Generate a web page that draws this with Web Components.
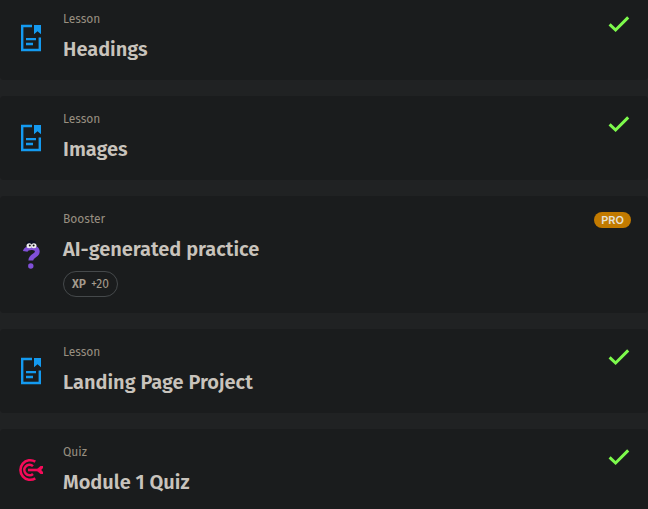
<!DOCTYPE html>
<html lang="en">
<head>
<meta charset="utf-8">
<title>Module lessons</title>
<style>
html{background:#202223}
body{margin:0;overflow:hidden;font-family:"Fira Sans","Noto Sans",sans-serif;color:#c8c3bc}
</style>
</head>
<body>
<lesson-list>
  <lesson-card kind="lesson" label="Lesson" status="done">Headings</lesson-card>
  <lesson-card kind="lesson" label="Lesson" status="done">Images</lesson-card>
  <lesson-card kind="booster" label="Booster" status="pro">AI-generated practice<xp-chip slot="extra">+20</xp-chip></lesson-card>
  <lesson-card kind="lesson" label="Lesson" status="done">Landing Page Project</lesson-card>
  <lesson-card kind="quiz" label="Quiz" status="done">Module 1 Quiz</lesson-card>
</lesson-list>
<script>
const icons = {
  lesson: `<svg width="32" height="32" viewBox="0 0 32 32" aria-hidden="true"><path d="M17 4H7.2V28H24.8V15.5" fill="none" stroke="#149af0" stroke-width="2.4"/><path d="M19 3H26V12.2L22.5 9.2L19 12.2Z" fill="#149af0"/><path d="M11 17.2H21M11 22H18" stroke="#149af0" stroke-width="2.3"/></svg>`,
  booster: `<svg width="32" height="32" viewBox="0 0 32 32" aria-hidden="true"><path d="M10.2 12.4C11 8 22.3 6.5 22.3 12.8C22.3 17 16 16 15.8 21.5" fill="none" stroke="#8150d8" stroke-width="4.8"/><circle cx="15.8" cy="27" r="2.7" fill="#8150d8"/><path d="M11.5 6Q10 2 14 2.5Q16 0 18 2Q21 1 21 5V8H12Z" fill="#0b1022"/><ellipse cx="14.2" cy="6.8" rx="2.7" ry="2.5" fill="#eee"/><ellipse cx="18.9" cy="6.8" rx="2.6" ry="2.5" fill="#eee"/><circle cx="14.8" cy="6.5" r="1" fill="#111"/><circle cx="18.6" cy="6.5" r="1" fill="#111"/></svg>`,
  quiz: `<svg width="32" height="32" viewBox="0 0 32 32" aria-hidden="true"><g fill="none" stroke="#f50b59" stroke-width="2.6"><path d="M20.3 6.6A9.8 9.8 0 1 0 20.3 23.4"/><path d="M18 11.1A5.2 5.2 0 1 0 18 18.9"/><path d="M13 15H24"/></g><path d="M21 15L25.5 11H28V13L26.2 15L28 17V19H25.5Z" fill="#f50b59"/></svg>`,
  done: `<svg width="24" height="24" viewBox="0 0 24 24" role="img" aria-label="Completed"><path d="M2.6 12.3L8.6 18L21.2 5.4" fill="none" stroke="#7dfa4c" stroke-width="3"/></svg>`
};
customElements.define('lesson-list', class extends HTMLElement {
  constructor() {
    super();
    this.attachShadow({mode:'open'}).innerHTML = `<style>
      :host{display:flex;flex-direction:column;gap:16px;margin-top:-4px}
    </style><slot></slot>`;
  }
});
customElements.define('xp-chip', class extends HTMLElement {
  constructor() {
    super();
    this.attachShadow({mode:'open'}).innerHTML = `<style>
      :host{display:inline-flex;box-sizing:border-box;height:26px;align-items:center;gap:5px;padding:0 8px;border:1px solid #45494b;border-radius:13px;font-size:12px;line-height:24px;color:#a49b8d;margin-top:7px}
      b{font-weight:600}
    </style><b>XP</b><span><slot></slot></span>`;
  }
});
customElements.define('status-mark', class extends HTMLElement {
  connectedCallback() {
    const type = this.getAttribute('type');
    this.attachShadow({mode:'open'}).innerHTML = `<style>
      :host{display:block}
      svg{display:block}
      .pro{display:block;padding:0 7px;border-radius:8px;background:#c27a00;color:#e6e0d6;font:600 11px/16px Inter,sans-serif}
    </style>${type === 'pro' ? '<span class="pro">PRO</span>' : icons[type]}`;
  }
});
customElements.define('lesson-card', class extends HTMLElement {
  connectedCallback() {
    const get = name => this.getAttribute(name);
    this.attachShadow({mode:'open'}).innerHTML = `<style>
      :host{display:flex;gap:16px;padding:0 17px 0 15px;background:#1a1c1d;border-radius:4px}
      .icon{flex:none;height:32px;align-self:center}
      .icon svg{display:block}
      .body{flex:1;min-width:0;padding:13px 0 16px}
      .label{margin:0;font-size:12px;line-height:20px;color:#988f81}
      h2{margin:5px 0 0;font-size:20px;line-height:30px;font-weight:600}
      status-mark{align-self:flex-start;margin-top:16px}
      .extra{display:flex}
    </style>
    <div class="icon">${icons[get('kind')]}</div>
    <div class="body"><p class="label">${get('label')}</p><h2><slot></slot></h2><div class="extra"><slot name="extra"></slot></div></div>
    <status-mark type="${get('status')}"></status-mark>`;
  }
});
</script>
</body>
</html>
